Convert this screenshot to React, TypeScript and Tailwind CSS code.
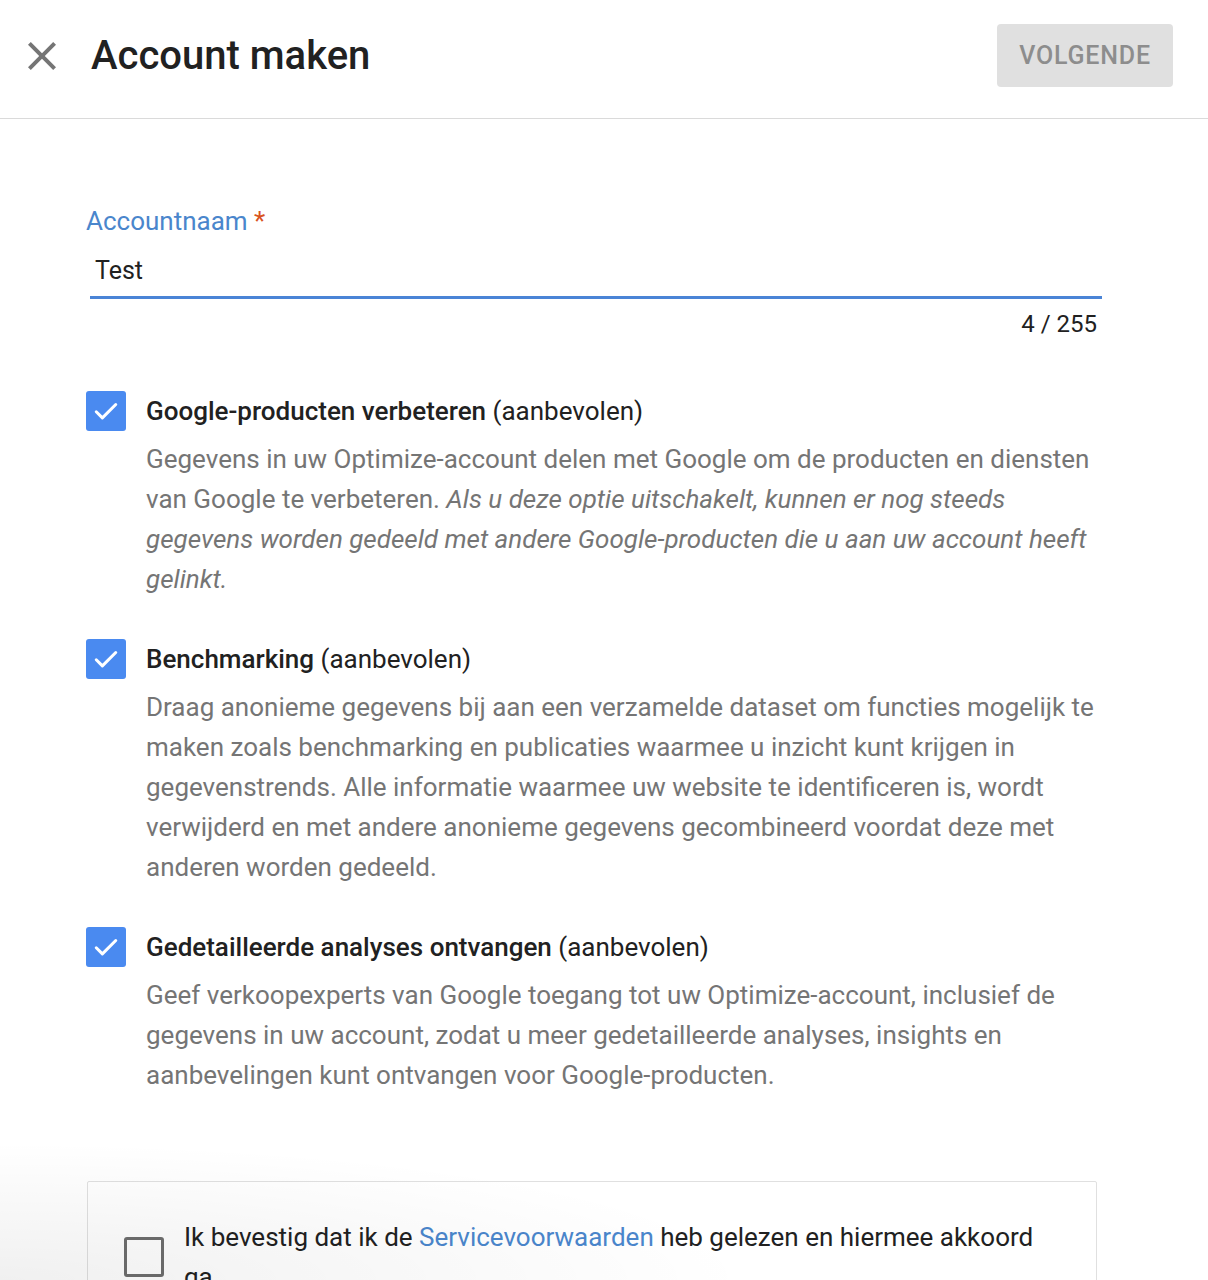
import React from "react";

const options = [
    {
        title: "Google-producten verbeteren",
        body: (
            <>
                Gegevens in uw Optimize-account delen met Google om de producten en diensten van Google te verbeteren.{" "}
                <em>
                    Als u deze optie uitschakelt, kunnen er nog steeds gegevens worden gedeeld met andere Google-producten die u aan uw account heeft gelinkt.
                </em>
            </>
        ),
    },
    {
        title: "Benchmarking",
        body: (
            <>
                Draag anonieme gegevens bij aan een verzamelde dataset om functies mogelijk te maken zoals benchmarking en publicaties waarmee u inzicht kunt krijgen in gegevenstrends. Alle informatie waarmee uw website te identificeren is, wordt verwijderd en met andere anonieme gegevens gecombineerd voordat deze met anderen worden gedeeld.
            </>
        ),
    },
    {
        title: "Gedetailleerde analyses ontvangen",
        body: (
            <>
                Geef verkoopexperts van Google toegang tot uw Optimize-account, inclusief de gegevens in uw account, zodat u meer gedetailleerde analyses, insights en aanbevelingen kunt ontvangen voor Google-producten.
            </>
        ),
    },
];

function CheckedBox() {
    return (
        <div className="w-10 h-10 shrink-0 rounded-[3px] bg-[#4a8af0] flex items-center justify-center">
            <svg width="30" height="30" viewBox="0 0 24 24" fill="none">
                <path d="M4.2 12.6l4.9 4.9L19.8 6.8" stroke="white" strokeWidth="2.4" strokeLinecap="round" strokeLinejoin="round" />
            </svg>
        </div>
    );
}

export default function App() {
    return (
        <div className="relative min-h-[1280px] bg-white font-['Roboto',sans-serif] overflow-hidden">
            {/* Header */}
            <header className="h-[119px] flex items-center border-b border-[#dadada] pl-[18px] pr-[35px]">
                <svg width="48" height="48" viewBox="0 0 24 24" className="shrink-0 mt-[-6px]">
                    <path d="M19 6.41L17.59 5 12 10.59 6.41 5 5 6.41 10.59 12 5 17.59 6.41 19 12 13.41 17.59 19 19 17.59 13.41 12z" fill="#757575" />
                </svg>
                <h1 className="ml-[25px] mt-[-6px] text-[40px] font-medium text-[#212121] leading-none">Account maken</h1>
                <button className="ml-auto mt-[-7px] w-[176px] h-[63px] rounded bg-[#e0e0e0] text-[#8d8d8d] text-[25px] font-medium tracking-[0.8px]">
                    VOLGENDE
                </button>
            </header>

            <main className="pl-[86px] w-[1102px]">
                {/* Account name field */}
                <div className="mt-[86px]">
                    <label className="block text-[26px] leading-[32px] text-[#4a86cc]">
                        Accountnaam <span className="text-[#d9531e]">*</span>
                    </label>
                    <div className="mt-[18px] ml-[4px] border-b-[3px] border-[#4a84d6] pb-[9px] pl-[5px] text-[25px] leading-[32px] text-[#212121]">
                        Test
                    </div>
                    <div className="mt-[11px] pr-[5px] text-right text-[24px] leading-[28px] text-[#212121]">4 / 255</div>
                </div>

                {/* Options */}
                <div className="mt-[53px] flex flex-col gap-10 pr-[5px]">
                    {options.map((opt) => (
                        <div key={opt.title} className="flex gap-5">
                            <CheckedBox />
                            <div className="flex flex-col gap-2">
                                <div className="text-[26px] leading-[40px] text-[#212121]">
                                    <span className="font-medium">{opt.title}</span> (aanbevolen)
                                </div>
                                <p className="text-[26px] leading-[40px] text-[#757575]">{opt.body}</p>
                            </div>
                        </div>
                    ))}
                </div>

                {/* Terms card */}
                <div className="mt-[86px] ml-px w-[1010px] border border-[#e0e0e0] rounded-[2px] pt-[35px] pl-[36px] pr-[40px] pb-[30px] flex items-center gap-5">
                    <div className="w-10 h-10 shrink-0 rounded-[3px] border-[3px] border-[#6e6e6e]" />
                    <p className="text-[26px] leading-[40px] text-[#212121]">
                        Ik bevestig dat ik de <span className="text-[#4a86cc]">Servicevoorwaarden</span> heb gelezen en hiermee akkoord ga.
                    </p>
                </div>
            </main>

            {/* Bottom fade */}
            <div className="pointer-events-none absolute left-0 top-[1140px] w-[760px] h-[140px] bg-[radial-gradient(ellipse_at_bottom_left,rgba(0,0,0,0.06),transparent_70%)]" />
        </div>
    );
}
